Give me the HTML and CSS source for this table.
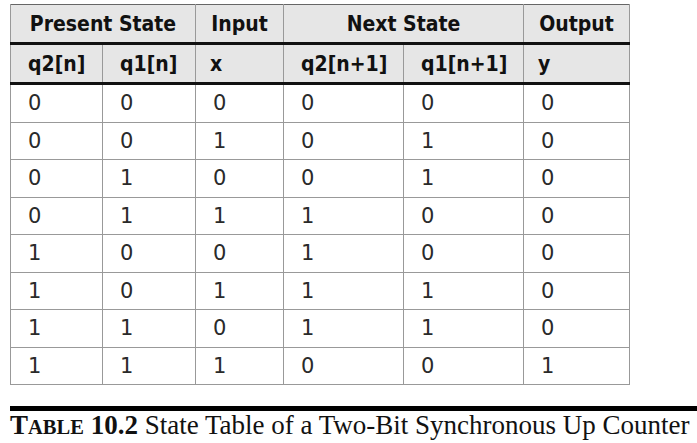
FILE: index.html
```html
<!DOCTYPE html>
<html>
<head>
<meta charset="utf-8">
<link rel="stylesheet" href="styles.css">
</head>
<body>
<div class="page">
<table class="state">
  <colgroup>
    <col class="c1"><col class="c2"><col class="c3"><col class="c4"><col class="c5"><col class="c6">
  </colgroup>
  <thead>
    <tr class="h1">
      <th colspan="2">Present State</th>
      <th>Input</th>
      <th colspan="2">Next State</th>
      <th>Output</th>
    </tr>
    <tr class="h2">
      <th>q2[n]</th><th>q1[n]</th><th>x</th><th>q2[n+1]</th><th>q1[n+1]</th><th>y</th>
    </tr>
  </thead>
  <tbody>
    <tr><td>0</td><td>0</td><td>0</td><td>0</td><td>0</td><td>0</td></tr>
    <tr><td>0</td><td>0</td><td>1</td><td>0</td><td>1</td><td>0</td></tr>
    <tr><td>0</td><td>1</td><td>0</td><td>0</td><td>1</td><td>0</td></tr>
    <tr><td>0</td><td>1</td><td>1</td><td>1</td><td>0</td><td>0</td></tr>
    <tr><td>1</td><td>0</td><td>0</td><td>1</td><td>0</td><td>0</td></tr>
    <tr><td>1</td><td>0</td><td>1</td><td>1</td><td>1</td><td>0</td></tr>
    <tr><td>1</td><td>1</td><td>0</td><td>1</td><td>1</td><td>0</td></tr>
    <tr><td>1</td><td>1</td><td>1</td><td>0</td><td>0</td><td>1</td></tr>
  </tbody>
</table>
<div class="caption"><span class="label">T<span class="sc">ABLE</span> 10.2</span> State Table of a Two-Bit Synchronous Up Counter</div>
</div>
</body>
</html>
```
FILE: styles.css
```css
html, body {
  margin: 0;
  padding: 0;
  background: #fff;
}
.page {
  padding: 4px 0 0 10px;
}
.state {
  border-collapse: collapse;
  table-layout: fixed;
  width: 620px;
  border: 1px solid #666;
  font-family: "DejaVu Sans", sans-serif;
}
.c1 { width: 92px; }
.c2 { width: 93px; }
.c3 { width: 88px; }
.c4 { width: 120px; }
.c5 { width: 120px; }
.c6 { width: 106px; }
.state th {
  background: #e6e6e6;
  font-family: "DejaVu Sans Condensed", "DejaVu Sans", sans-serif;
  font-stretch: condensed;
  font-weight: bold;
  font-size: 21px;
  color: #111;
  border-left: 1px solid #999;
  border-right: 1px solid #999;
  padding: 0;
}
.h1 th {
  height: 37px;
  text-align: center;
  border-bottom: 3px solid #111;
}
.h2 th {
  height: 37px;
  text-align: left;
  padding-left: 17px;
  border-bottom: 3px solid #111;
}
.h2 th:nth-child(3), .h2 th:nth-child(6) {
  padding-left: 14px;
}
.state td {
  height: 36.5px;
  padding: 0 0 0 17px;
  font-size: 21px;
  color: #2a2a2a;
  border: 1px solid #999;
}
.caption {
  margin-top: 21px;
  border-top: 5px solid #000;
  padding-top: 0;
  font-family: "Liberation Serif", serif;
  font-size: 27px;
  line-height: 29px;
  color: #111;
  white-space: nowrap;
}
.label {
  font-weight: bold;
}
.sc {
  font-size: 0.76em;
}
```
